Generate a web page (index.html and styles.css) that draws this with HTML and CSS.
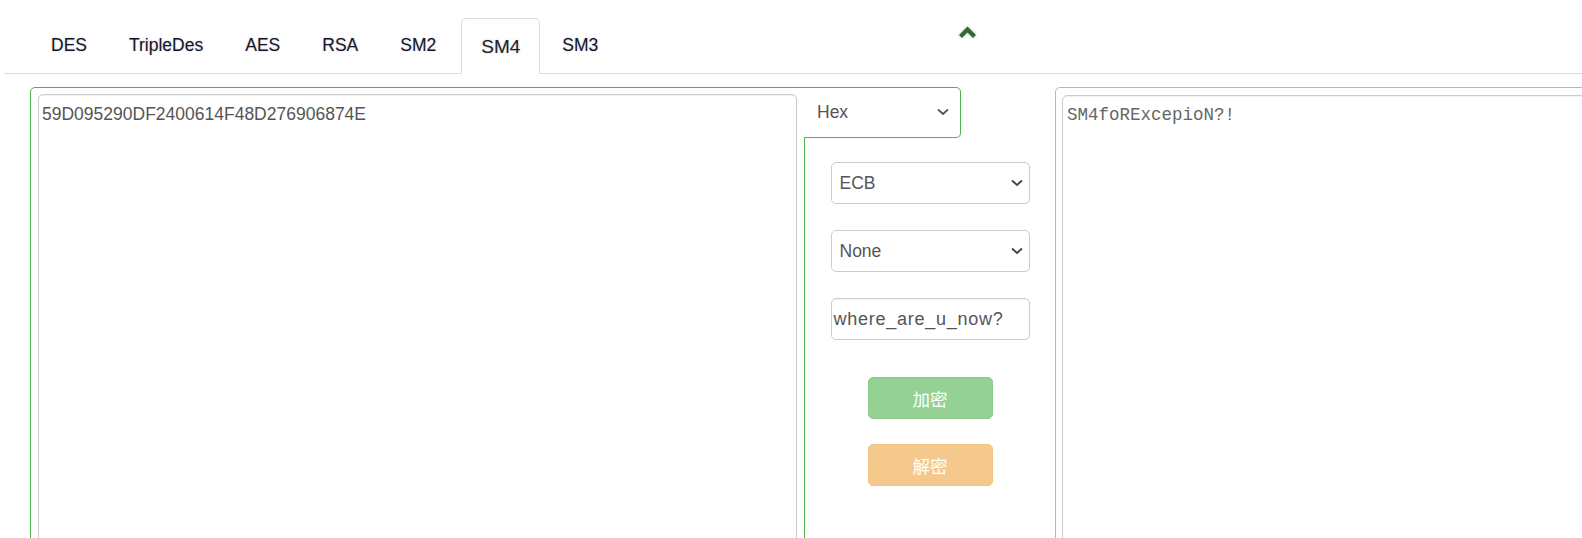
FILE: index.html
```html
<!DOCTYPE html>
<html>
<head>
<meta charset="utf-8">
<link rel="stylesheet" href="styles.css">
</head>
<body>
<div class="nav">
  <ul class="tabs">
    <li class="tab">DES</li>
    <li class="tab">TripleDes</li>
    <li class="tab">AES</li>
    <li class="tab">RSA</li>
    <li class="tab">SM2</li>
    <li class="tab active">SM4</li>
    <li class="tab">SM3</li>
  </ul>
  <svg class="collapse" width="19" height="12" viewBox="0 0 19 12"><polyline points="2.5,10.5 9.5,3.5 16.5,10.5" fill="none" stroke="#2f6a32" stroke-width="4.2"/></svg>
</div>
<div class="row">
  <div class="panel panel-left">
    <div class="textarea">59D095290DF2400614F48D276906874E</div>
    <div class="hexbox">
      <span>Hex</span>
      <svg width="12" height="8" viewBox="0 0 12 8"><polyline points="1,1.5 6,6 11,1.5" fill="none" stroke="#555" stroke-width="1.8"/></svg>
    </div>
  </div>
  <div class="middle">
    <div class="select"><span>ECB</span><svg width="12" height="8" viewBox="0 0 12 8"><polyline points="1,1.5 6,6 11,1.5" fill="none" stroke="#444" stroke-width="1.8"/></svg></div>
    <div class="select"><span>None</span><svg width="12" height="8" viewBox="0 0 12 8"><polyline points="1,1.5 6,6 11,1.5" fill="none" stroke="#444" stroke-width="1.8"/></svg></div>
    <div class="input">where_are_u_now?</div>
    <div class="btn btn-success">加密</div>
    <div class="btn btn-warning">解密</div>
  </div>
  <div class="panel panel-right">
    <div class="textarea mono">SM4foRExcepioN?!</div>
  </div>
</div>
</body>
</html>
```
FILE: styles.css
```css
html, body {
  margin: 0;
  padding: 0;
  background: #fff;
}
body {
  width: 1582px;
  height: 538px;
  overflow: hidden;
  font-family: "Liberation Sans", Arial, sans-serif;
  font-size: 17.5px;
  color: #555;
}
.nav {
  margin-left: 4px;
  padding-top: 18px;
  padding-left: 27px;
  border-bottom: 1px solid #ddd;
  display: flex;
  align-items: flex-end;
  height: 55px;
}
.tabs {
  list-style: none;
  margin: 0;
  padding: 0;
  display: flex;
  align-items: flex-end;
  height: 55px;
}
.tab {
  box-sizing: border-box;
  height: 56px;
  margin-bottom: -1px;
  margin-right: 2px;
  padding: 0 19px;
  display: flex;
  align-items: center;
  border: 1px solid transparent;
  border-radius: 5px 5px 0 0;
  color: #15152a;
  text-shadow: 0 0 2px rgba(0, 0, 40, 0.25);
  font-size: 17.5px;
  padding-bottom: 2px;
}
.tab.active {
  font-size: 19px;
  color: #222;
  background: #fff;
  border-color: #ddd;
  border-bottom-color: #fff;
  padding: 2px 19px 0;
  margin-left: 3px;
}
.collapse {
  align-self: flex-start;
  margin-top: 8px;
  margin-left: 338px;
  filter: drop-shadow(0 0 1.5px rgba(0, 0, 0, 0.25));
}
.row {
  display: flex;
  margin-top: 13px;
  margin-left: 30px;
  align-items: flex-start;
}
.panel {
  position: relative;
  flex-shrink: 0;
  box-sizing: border-box;
  width: 775px;
  height: 500px;
  border: 1px solid #4db34d;
  border-radius: 5px;
}
.panel-left {
  padding: 6px 7px;
  border-top-right-radius: 0;
}
.panel-right {
  border-color: #e8b928;
  padding: 7px 6px;
}
.textarea {
  box-sizing: border-box;
  width: 759px;
  height: 480px;
  border: 1px solid #ccc;
  border-radius: 5px;
  padding: 7px 3px;
  line-height: 25px;
  color: #555;
  box-shadow: inset 0 1px 1px rgba(0, 0, 0, 0.06);
}
.textarea.mono {
  font-family: "Liberation Mono", "Courier New", monospace;
  color: #666;
  padding-left: 4px;
}
.hexbox {
  position: absolute;
  left: 773px;
  top: -1px;
  box-sizing: border-box;
  width: 157px;
  height: 51px;
  background: #fff;
  border: 1px solid #4db34d;
  border-left: none;
  border-radius: 0 5px 5px 0;
  display: flex;
  align-items: center;
  justify-content: space-between;
  padding: 0 11px 0 13px;
  color: #555;
}
.hexbox svg {
  margin-top: -2px;
}
.middle {
  flex-shrink: 0;
  width: 250px;
  box-sizing: border-box;
  padding-top: 75px;
  display: flex;
  flex-direction: column;
  align-items: center;
}
.select, .input {
  box-sizing: border-box;
  width: 199px;
  height: 42px;
  border: 1px solid #ccc;
  border-radius: 5px;
  display: flex;
  align-items: center;
  margin-bottom: 26px;
  color: #555;
}
.select {
  justify-content: space-between;
  padding: 0 6px 0 8px;
}
.input {
  padding-left: 2px;
  font-size: 18px;
  letter-spacing: 0.75px;
  box-shadow: inset 0 1px 1px rgba(0, 0, 0, 0.05);
}
.btn {
  box-sizing: border-box;
  width: 125px;
  height: 42px;
  border-radius: 5px;
  border: 1px solid;
  display: flex;
  align-items: center;
  justify-content: center;
  color: #fff;
  font-family: "Noto Sans CJK SC", "Liberation Sans", sans-serif;
  font-size: 17.5px;
}
.btn-success {
  margin-top: 11px;
  background: #95d195;
  border-color: #8bcb8b;
}
.btn-warning {
  margin-top: 25px;
  background: #f5c98c;
  border-color: #f3c27e;
}
```
